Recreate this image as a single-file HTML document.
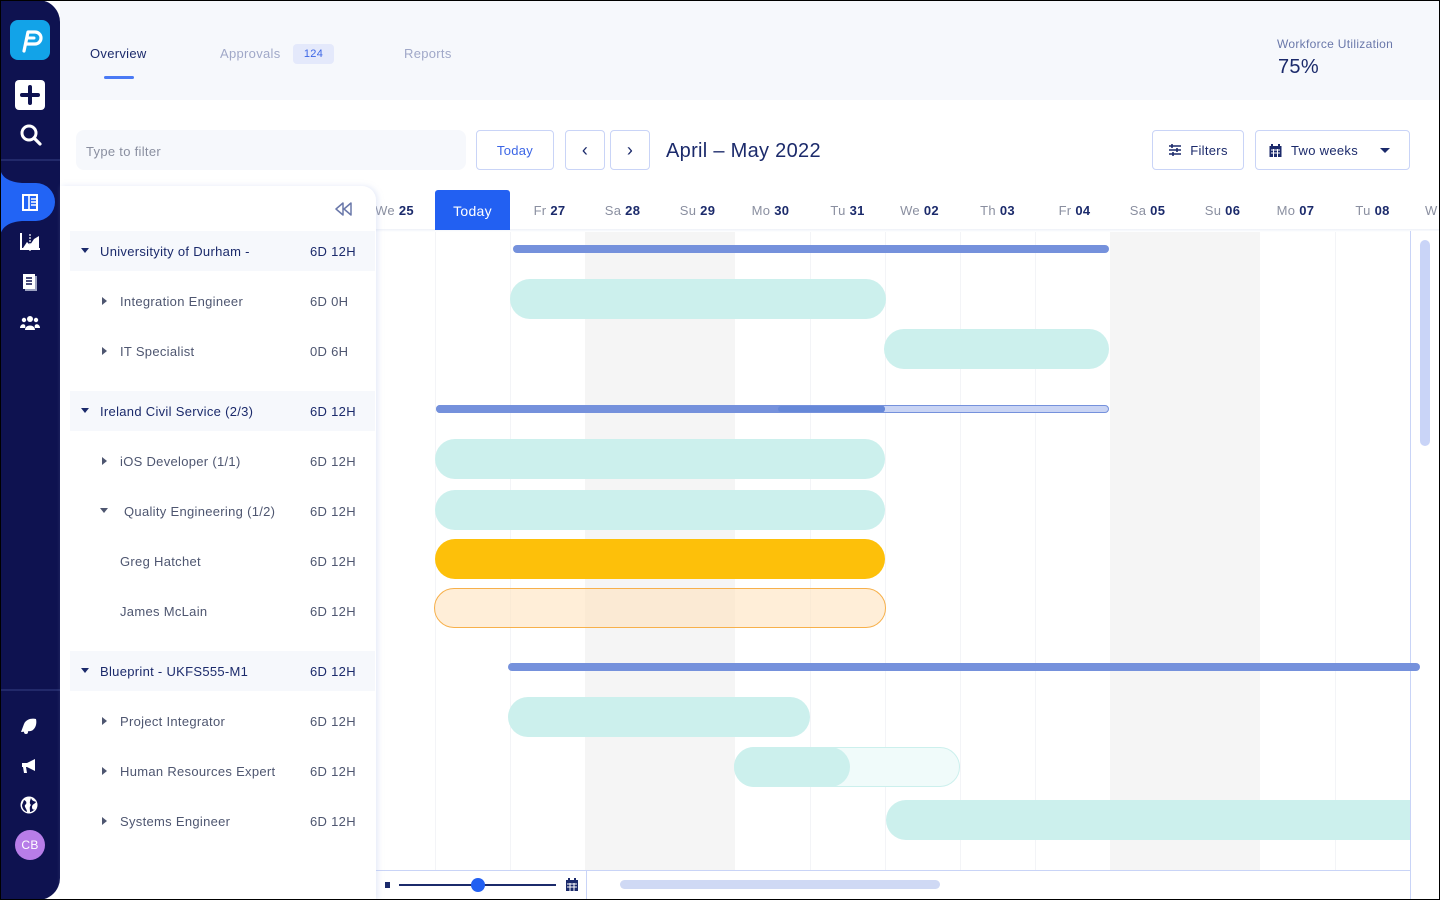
<!DOCTYPE html>
<html><head><meta charset="utf-8"><style>
*{box-sizing:border-box;margin:0;padding:0}
body{width:1440px;height:900px;overflow:hidden;font-family:"Liberation Sans",sans-serif;background:#fff;position:relative;color:#1b2a6b;letter-spacing:0.3px}
.a{position:absolute}
.frame{position:absolute;inset:0;border:1px solid #000;pointer-events:none;z-index:50}
.side{left:0;top:0;width:60px;height:900px;background:#0e1250;border-radius:0 22px 22px 0}
.hdr{left:60px;top:0;width:1380px;height:100px;background:#f6f8fc}
.tab{top:46px;font-size:13px;color:#a0a8c8}
.btn{border:1px solid #c9d4f7;border-radius:4px;background:#fff;display:flex;align-items:center;justify-content:center;font-size:13px}
.day{top:203px;font-size:13px;color:#8a8fa0;width:75px;text-align:center}
.day b{color:#1b2a6b;font-weight:bold}
.row{left:70px;width:305px;height:40px;font-size:13px;color:#4e5670}
.row .t{position:absolute;left:50px;top:13px}
.row .h{position:absolute;left:240px;top:13px}
.g{background:#f6f8fc;color:#1b2a6b}
.g .t{left:30px}
.tri{position:absolute;width:0;height:0}
.dn{border-left:4px solid transparent;border-right:4px solid transparent;border-top:5px solid #1b2a6b}
.rt{border-top:4px solid transparent;border-bottom:4px solid transparent;border-left:5px solid #4e5670}
.vl{top:231px;width:1px;height:639px;background:#f3f4f7}
.bar{height:40px;border-radius:20px;background:#ccf0ed}
.thin{height:8px;border-radius:4px;background:#7591dc}
</style></head><body>
<div class="frame"></div>
<div class="a side"></div>
<div class="a" style="left:10px;top:20px;width:40px;height:40px;background:#12a3e8;border-radius:8px"></div>
<svg class="a" style="left:10px;top:20px" width="40" height="40" viewBox="0 0 40 40"><path d="M14 31 L18 12 H25 A6 6 0 0 1 25 24 H16" fill="none" stroke="#fff" stroke-width="3.2" stroke-linecap="round" stroke-linejoin="round"/><path d="M17 18 H24" stroke="#fff" stroke-width="3" stroke-linecap="round"/></svg>
<div class="a" style="left:15px;top:80px;width:30px;height:30px;background:#fff;border-radius:4px"></div>
<div class="a" style="left:20px;top:93px;width:20px;height:4px;background:#0e1250;border-radius:2px"></div>
<div class="a" style="left:28px;top:85px;width:4px;height:20px;background:#0e1250;border-radius:2px"></div>
<svg class="a" style="left:19px;top:123px" width="24" height="24" viewBox="0 0 24 24"><circle cx="10" cy="10" r="7" fill="none" stroke="#fff" stroke-width="3"/><path d="M15 15 L21 21" stroke="#fff" stroke-width="3.2" stroke-linecap="round"/></svg>
<div class="a" style="left:0;top:159px;width:60px;height:2px;background:#22296a"></div>
<svg class="a" style="left:0;top:166px" width="60" height="70" viewBox="0 0 60 70"><path d="M0 0 C0 12 10 16 22 17 H36 A19 19 0 0 1 36 55 H22 C10 56 2 60 0 70 Z" fill="#2264f5"/></svg>
<svg class="a" style="left:20px;top:193px" width="20" height="20" viewBox="0 0 20 20"><rect x="3" y="2" width="14" height="15" fill="none" stroke="#fff" stroke-width="2"/><path d="M9 2 V17 M11 6 H16 M11 9 H16 M11 12 H16" stroke="#fff" stroke-width="1.6"/></svg>
<svg class="a" style="left:19px;top:231px" width="22" height="22" viewBox="0 0 22 22"><path d="M2 2 V18 H21" stroke="#fff" stroke-width="2" fill="none"/><path d="M4 17 L8 11 L11 14 L15 8 L20 5 V17 Z" fill="#fff"/><path d="M11 3 V21" stroke="#fff" stroke-width="1.2" stroke-dasharray="2 1"/></svg>
<svg class="a" style="left:21px;top:273px" width="18" height="20" viewBox="0 0 18 20"><rect x="4" y="3" width="12" height="15" fill="#9aa0c0"/><rect x="2" y="1" width="12" height="15" fill="#fff"/><path d="M5 5 H11 M5 8 H11 M5 11 H11" stroke="#0e1250" stroke-width="1.4"/></svg>
<svg class="a" style="left:20px;top:314px" width="20" height="18" viewBox="0 0 20 18"><circle cx="10" cy="5" r="3" fill="#fff"/><circle cx="4" cy="6" r="2.2" fill="#fff"/><circle cx="16" cy="6" r="2.2" fill="#fff"/><path d="M5 16 C5 10 15 10 15 16 Z M0 14 C0 9 7 9 5 14 Z M20 14 C20 9 13 9 15 14Z" fill="#fff"/></svg>
<div class="a" style="left:0;top:689px;width:60px;height:2px;background:#22296a"></div>
<svg class="a" style="left:19px;top:716px" width="20" height="20" viewBox="0 0 20 20"><path d="M2 16 L5 8 C7 3 13 2 17 3 C18 7 17 13 12 15 Z" fill="#fff"/><circle cx="7" cy="16" r="2" fill="#fff"/></svg>
<svg class="a" style="left:19px;top:756px" width="20" height="20" viewBox="0 0 20 20"><path d="M3 7 H8 L16 3 V15 L8 11 H7 L8 17 H5 L4 11 H3 Z" fill="#fff"/></svg>
<svg class="a" style="left:19px;top:795px" width="20" height="20" viewBox="0 0 20 20"><circle cx="10" cy="10" r="8.5" fill="#fff"/><path d="M5 5 C8 6 8 9 6 10 C5 12 8 14 8 17 C5 16 3 13 3 10 Z M12 3 C13 6 15 6 17 7 C16 9 13 9 13 12 C13 15 15 15 16 14 C14 16 12 17 11 17 C11 14 10 12 12 10 C10 8 11 6 12 3 Z" fill="#0e1250"/></svg>
<div class="a" style="left:15px;top:830px;width:30px;height:30px;border-radius:50%;background:#b77de8;color:#fff;font-size:12px;text-align:center;line-height:30px">CB</div>

<div class="a hdr"></div>
<div class="a tab" style="left:90px;color:#1b2a6b">Overview</div>
<div class="a" style="left:104px;top:76px;width:30px;height:3px;border-radius:2px;background:#4a7af5"></div>
<div class="a tab" style="left:220px">Approvals</div>
<div class="a" style="left:293px;top:44px;width:41px;height:20px;border-radius:4px;background:#e4e9fb;color:#3c66e6;font-size:11px;text-align:center;line-height:20px">124</div>
<div class="a tab" style="left:404px">Reports</div>
<div class="a" style="left:1277px;top:37px;font-size:12px;color:#6a78aa">Workforce Utilization</div>
<div class="a" style="left:1278px;top:56px;font-size:20px;color:#1b2a6b">75%</div>

<div class="a" style="left:76px;top:130px;width:390px;height:40px;border-radius:8px;background:#f6f8fc;font-size:13px;color:#8a8fa0;padding:14px 10px">Type to filter</div>
<div class="a btn" style="left:476px;top:130px;width:78px;height:40px;color:#3c66e6">Today</div>
<div class="a btn" style="left:565px;top:130px;width:40px;height:40px;font-size:18px">&#8249;</div>
<div class="a btn" style="left:610px;top:130px;width:40px;height:40px;font-size:18px">&#8250;</div>
<div class="a" style="left:666px;top:140px;font-size:20px;color:#1b2a6b">April – May 2022</div>
<div class="a btn" style="left:1152px;top:130px;width:92px;height:40px"><svg width="14" height="12" viewBox="0 0 14 12" style="margin-right:8px"><path d="M1 2H13M1 6H13M1 10H13" stroke="#1b2a6b" stroke-width="1.6"/><path d="M4 0V4M9 4V8M5 8V12" stroke="#1b2a6b" stroke-width="1.6"/></svg>Filters</div>
<div class="a btn" style="left:1255px;top:130px;width:155px;height:40px;justify-content:flex-start;padding-left:13px"><svg width="13" height="13" viewBox="0 0 13 13" style="margin-right:9px"><rect x="0.5" y="2" width="12" height="11" fill="#1b2a6b"/><path d="M3 0V3M10 0V3" stroke="#1b2a6b" stroke-width="2"/><path d="M2 6H11M2 9H11M4.5 5V13M8.5 5V13" stroke="#fff" stroke-width="1"/></svg>Two weeks<span style="position:absolute;right:19px;top:17px;border-left:5px solid transparent;border-right:5px solid transparent;border-top:5px solid #1b2a6b"></span></div>

<div class="a" style="left:585px;top:231px;width:150px;height:639px;background:#f5f5f5"></div>
<div class="a" style="left:1110px;top:231px;width:150px;height:639px;background:#f5f5f5"></div>
<div class="a vl" style="left:435px"></div><div class="a vl" style="left:510px"></div><div class="a vl" style="left:810px"></div><div class="a vl" style="left:885px"></div><div class="a vl" style="left:960px"></div><div class="a vl" style="left:1035px"></div><div class="a vl" style="left:1335px"></div>
<div class="a" style="left:375px;top:229px;width:1065px;height:3px;background:linear-gradient(#eef1f8,#fff)"></div>
<div class="a" style="left:435px;top:190px;width:75px;height:40px;background:#2260f2;border-radius:3px 3px 0 0;color:#fff;font-size:14px;text-align:center;line-height:42px">Today</div>
<div class="a day" style="left:357px">We <b>25</b></div>
<div class="a day" style="left:512px">Fr <b>27</b></div>
<div class="a day" style="left:585px">Sa <b>28</b></div>
<div class="a day" style="left:660px">Su <b>29</b></div>
<div class="a day" style="left:733px">Mo <b>30</b></div>
<div class="a day" style="left:810px">Tu <b>31</b></div>
<div class="a day" style="left:882px">We <b>02</b></div>
<div class="a day" style="left:960px">Th <b>03</b></div>
<div class="a day" style="left:1037px">Fr <b>04</b></div>
<div class="a day" style="left:1110px">Sa <b>05</b></div>
<div class="a day" style="left:1185px">Su <b>06</b></div>
<div class="a day" style="left:1258px">Mo <b>07</b></div>
<div class="a day" style="left:1335px">Tu <b>08</b></div>
<div class="a day" style="left:1425px;text-align:left">W</div>

<div class="a" style="left:1410px;top:231px;width:30px;height:669px;background:#fff;border-left:1px solid #c9d4f7"></div>
<div class="a" style="left:1420px;top:240px;width:10px;height:206px;border-radius:5px;background:#c9d4f7"></div>

<div class="a thin" style="left:513px;top:245px;width:596px"></div>
<div class="a bar" style="left:510px;top:279px;width:376px"></div>
<div class="a bar" style="left:884px;top:329px;width:225px"></div>
<div class="a thin" style="left:436px;top:405px;width:673px;background:#c9d4f4;border:1px solid #7591dc"></div>
<div class="a thin" style="left:436px;top:405px;width:449px"></div>
<div class="a" style="left:778px;top:406px;width:107px;height:6px;border-radius:3px;background:#6688d8"></div>
<div class="a bar" style="left:435px;top:439px;width:450px"></div>
<div class="a bar" style="left:435px;top:490px;width:450px"></div>
<div class="a bar" style="left:435px;top:539px;width:450px;background:#fdc00a"></div>
<div class="a bar" style="left:434px;top:588px;width:452px;background:rgba(255,226,190,.6);border:1px solid #f7b04a"></div>
<div class="a thin" style="left:508px;top:663px;width:912px"></div>
<div class="a bar" style="left:508px;top:697px;width:302px"></div>
<div class="a bar" style="left:734px;top:747px;width:226px;background:#f0fbfa;border:1px solid #ccf0ed"></div>
<div class="a bar" style="left:734px;top:747px;width:116px"></div>
<div class="a bar" style="left:886px;top:800px;width:524px;border-radius:20px 0 0 20px"></div>

<div class="a" style="left:375px;top:870px;width:1035px;height:30px;background:#fff;border-top:1px solid #c9d4f7"></div>
<div class="a" style="left:586px;top:870px;width:1px;height:30px;background:#c9d4f7"></div>
<div class="a" style="left:385px;top:882px;width:5px;height:6px;background:#1b2a6b"></div>
<div class="a" style="left:399px;top:884px;width:157px;height:2px;background:#1b2a6b"></div>
<div class="a" style="left:471px;top:878px;width:14px;height:14px;border-radius:50%;background:#2260f2"></div>
<svg class="a" style="left:566px;top:878px" width="12" height="13" viewBox="0 0 12 13"><rect x="0" y="2" width="12" height="11" fill="#1b2a6b"/><path d="M3 0V3M9 0V3" stroke="#1b2a6b" stroke-width="2"/><path d="M1 6H11M1 9H11M4 5V13M8 5V13" stroke="#fff" stroke-width="1"/></svg>
<div class="a" style="left:620px;top:880px;width:320px;height:9px;border-radius:5px;background:#cfd9f4"></div>

<div class="a" style="left:60px;top:186px;width:316px;height:714px;background:#fff;border-radius:0 14px 0 0;box-shadow:2px 0 6px rgba(180,195,235,.35)"></div>
<svg class="a" style="left:334px;top:202px" width="20" height="14" viewBox="0 0 20 14"><path d="M9 1 L2 7 L9 13 Z M17 1 L10 7 L17 13 Z" fill="none" stroke="#6a78aa" stroke-width="1.5" stroke-linejoin="round"/></svg>

<div class="a row g" style="top:231px"><span class="tri dn" style="left:11px;top:17px"></span><span class="t">Universityity of Durham -</span><span class="h">6D 12H</span></div>
<div class="a row" style="top:281px"><span class="tri rt" style="left:32px;top:16px"></span><span class="t">Integration Engineer</span><span class="h">6D 0H</span></div>
<div class="a row" style="top:331px"><span class="tri rt" style="left:32px;top:16px"></span><span class="t">IT Specialist</span><span class="h">0D 6H</span></div>
<div class="a row g" style="top:391px"><span class="tri dn" style="left:11px;top:17px"></span><span class="t">Ireland Civil Service (2/3)</span><span class="h">6D 12H</span></div>
<div class="a row" style="top:441px"><span class="tri rt" style="left:32px;top:16px"></span><span class="t">iOS Developer (1/1)</span><span class="h">6D 12H</span></div>
<div class="a row" style="top:491px"><span class="tri dn" style="left:30px;top:17px;border-top-color:#4e5670"></span><span class="t" style="left:54px">Quality Engineering (1/2)</span><span class="h">6D 12H</span></div>
<div class="a row" style="top:541px"><span class="t">Greg Hatchet</span><span class="h">6D 12H</span></div>
<div class="a row" style="top:591px"><span class="t">James McLain</span><span class="h">6D 12H</span></div>
<div class="a row g" style="top:651px"><span class="tri dn" style="left:11px;top:17px"></span><span class="t">Blueprint - UKFS555-M1</span><span class="h">6D 12H</span></div>
<div class="a row" style="top:701px"><span class="tri rt" style="left:32px;top:16px"></span><span class="t">Project Integrator</span><span class="h">6D 12H</span></div>
<div class="a row" style="top:751px"><span class="tri rt" style="left:32px;top:16px"></span><span class="t">Human Resources Expert</span><span class="h">6D 12H</span></div>
<div class="a row" style="top:801px"><span class="tri rt" style="left:32px;top:16px"></span><span class="t">Systems Engineer</span><span class="h">6D 12H</span></div>
</body></html>
